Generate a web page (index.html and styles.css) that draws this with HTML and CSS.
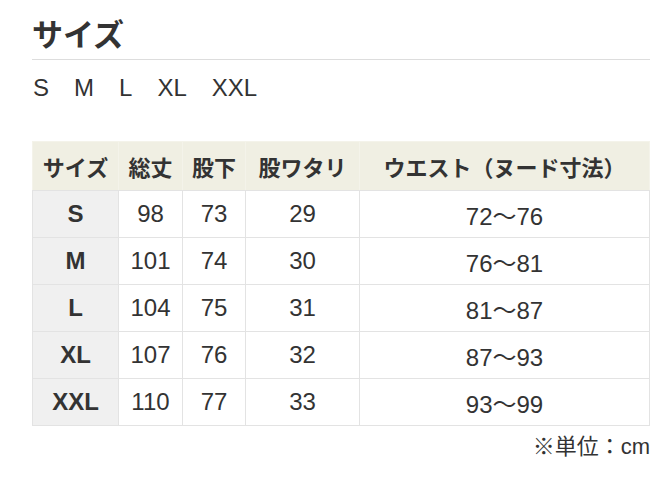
FILE: index.html
```html
<!DOCTYPE html>
<html lang="ja">
<head>
<meta charset="utf-8">
<link rel="stylesheet" href="styles.css">
</head>
<body>
<div class="page">
  <h1 class="title">サイズ</h1>
  <div class="sizes">
    <span>S</span><span>M</span><span>L</span><span>XL</span><span>XXL</span>
  </div>
  <table class="size-table">
    <colgroup>
      <col class="c1"><col class="c2"><col class="c3"><col class="c4"><col class="c5">
    </colgroup>
    <thead>
      <tr><th>サイズ</th><th>総丈</th><th>股下</th><th>股ワタリ</th><th>ウエスト（ヌード寸法）</th></tr>
    </thead>
    <tbody>
      <tr><th>S</th><td>98</td><td>73</td><td>29</td><td>72〜76</td></tr>
      <tr><th>M</th><td>101</td><td>74</td><td>30</td><td>76〜81</td></tr>
      <tr><th>L</th><td>104</td><td>75</td><td>31</td><td>81〜87</td></tr>
      <tr><th>XL</th><td>107</td><td>76</td><td>32</td><td>87〜93</td></tr>
      <tr><th>XXL</th><td>110</td><td>77</td><td>33</td><td>93〜99</td></tr>
    </tbody>
  </table>
  <p class="note">※単位：cm</p>
</div>
</body>
</html>
```
FILE: styles.css
```css
html, body {
  margin: 0;
  padding: 0;
  background: #fff;
}
body {
  font-family: "Liberation Sans", "Noto Sans CJK JP", sans-serif;
  color: #333;
}
.page {
  margin-left: 32px;
  width: 618px;
}
.title {
  margin: 0;
  padding-top: 13px;
  padding-bottom: 6px;
  font-family: "Noto Sans CJK JP", sans-serif;
  font-size: 31px;
  font-weight: 700;
  line-height: 40px;
  color: #333;
  border-bottom: 1px solid #ddd;
}
.sizes {
  display: flex;
  gap: 25px;
  margin-top: 13px;
  padding-left: 1px;
  font-size: 24px;
  line-height: 30px;
  color: #333;
}
.size-table {
  margin-top: 38px;
  width: 618px;
  border-collapse: collapse;
  table-layout: fixed;
}
.c1 { width: 86px; }
.c2 { width: 64px; }
.c3 { width: 63px; }
.c4 { width: 114px; }
.size-table th,
.size-table td {
  border: 1px solid #e3e3e3;
  text-align: center;
  padding: 0;
  height: 46px;
  font-size: 24px;
  color: #333;
}
.size-table thead th {
  background: #f0efe3;
  font-family: "Noto Sans CJK JP", sans-serif;
  font-weight: 700;
  font-size: 22px;
  border-color: #f4f3ea;
  border-bottom-color: #e3e3e3;
  height: 48px;
}
.size-table tbody th {
  background: #f0f0f0;
  font-weight: 700;
}
.note {
  margin: 5px 0 0;
  text-align: right;
  font-size: 22px;
  line-height: 32px;
  color: #333;
}
```
